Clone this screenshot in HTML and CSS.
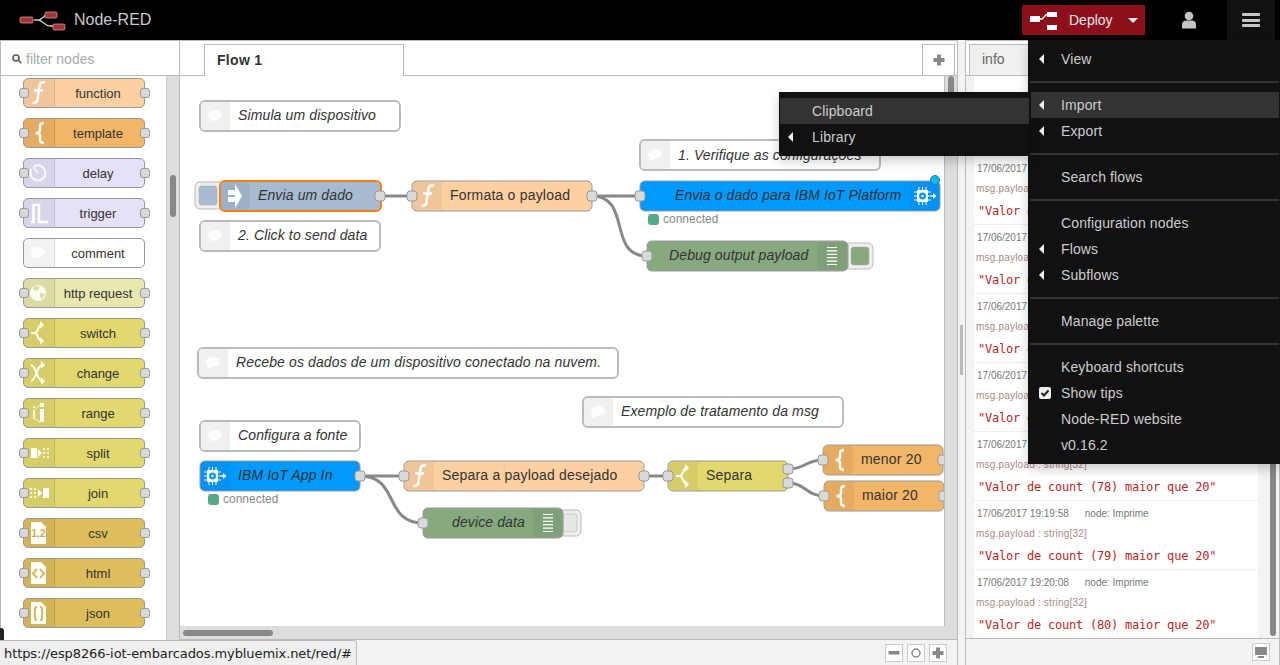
FILE: index.html
```html
<!DOCTYPE html>
<html lang="en">
  <head>
    <meta charset="UTF-8" />
    <title>Node-RED</title>
    <link rel="stylesheet" href="styles.css">
  </head>
  <body>
    <!-- icon sprites, all drawn in a 30x30 box -->
    <svg class="sprites" aria-hidden="true">
      <symbol id="i-func" viewBox="0 0 30 30"><path class="ln w25" d="M22 4.500c-3-1-5 0-5.500 3.500l-2 13c-.5 3.500-2.500 4.500-5 3.500M11 12.500h9"/></symbol>
      <symbol id="i-tmpl" viewBox="0 0 30 30"><path class="ln w25" d="M21 5c-3 0-4 1-4 3.500V12c0 2-1.500 3-4.500 3 3 0 4.500 1 4.500 3v3.500c0 2.500 1 3.500 4 3.500"/></symbol>
      <symbol id="i-delay" viewBox="0 0 30 30"><path class="ln w2 dim" d="M11 8.500A7.500 7.500 0 1 1 8.500 11"/><path class="ln w15 dim" d="M15.500 15.500L10 9"/></symbol>
      <symbol id="i-trig" viewBox="0 0 30 30"><path class="ln w25" d="M8 24h2.500V7H16v17h9"/></symbol>
      <symbol id="i-comment" viewBox="0 0 30 30"><ellipse class="fl soft" cx="15" cy="14" rx="7" ry="5"/><path class="fl soft" d="M11 17l-3 4 7-2z"/></symbol>
      <symbol id="i-globe" viewBox="0 0 30 30"><circle class="fl soft" cx="15" cy="15" r="8"/><path class="cut" d="M12 8l5 1-2 3-4 1-1-3zM17 15l5 1-3 5-2-2z"/></symbol>
      <symbol id="i-switch" viewBox="0 0 30 30"><path class="ln w2" d="M8 15h4c3 0 3-8 6-8M12 15c3 0 3 8 6 8"/><path class="fl" d="M17 3l4 4-4 4zM17 19l4 4-4 4z"/></symbol>
      <symbol id="i-change" viewBox="0 0 30 30"><path class="ln w2" d="M8 7c5 0 6 16 11 16M8 23c5 0 6-16 11-16"/><path class="fl" d="M18 3l4 4-4 4zM18 19l4 4-4 4z"/></symbol>
      <symbol id="i-range" viewBox="0 0 30 30"><path class="fl dim" d="M10 12h2v9h-2zM10 8h2v2h-2z"/><path class="fl" d="M17 11h4v13h-4zM17 5h4v4h-4z"/><path class="ln w1 dim" d="M12 11l5-4M12 21l5 3"/></symbol>
      <symbol id="i-split" viewBox="0 0 30 30"><path class="fl" d="M8 10h6v10H8zM15 11l4 4-4 4z"/><path class="fl dim" d="M20 10h2v2h-2zM24 10h2v2h-2zM20 14h2v2h-2zM24 14h2v2h-2zM20 18h2v2h-2zM24 18h2v2h-2z"/></symbol>
      <symbol id="i-join" viewBox="0 0 30 30"><path class="fl" d="M20 10h6v10h-6zM15 11l4 4-4 4z"/><path class="fl dim" d="M7 10h2v2H7zM11 10h2v2h-2zM7 14h2v2H7zM11 14h2v2h-2zM7 18h2v2H7zM11 18h2v2h-2z"/></symbol>
      <symbol id="i-html" viewBox="0 0 30 30"><path class="fl" d="M8 4h10l5 5v17H8z"/><path class="doc-ln" d="M14 11l-4 4.500 4 4.500M17 11l4 4.500-4 4.500"/></symbol>
      <symbol id="i-json" viewBox="0 0 30 30"><path class="fl" d="M8 4h10l5 5v17H8z"/><path class="doc-ln" d="M14 9c-2 0-2 1-2 2v2.500c0 1-.5 2-1.500 2 1 0 1.500 1 1.500 2V20c0 1 0 2 2 2M17 9c2 0 2 1 2 2v2.500c0 1 .5 2 1.500 2-1 0-1.500 1-1.500 2V20c0 1 0 2-2 2"/></symbol>
      <symbol id="i-inject" viewBox="0 0 30 30"><path class="fl" d="M8 9h7v5H8zM8 16h7v5H8zM15 3l7 12-7 12z"/></symbol>
      <symbol id="i-chip" viewBox="0 0 30 30"><path class="fl" d="M7 9h11v12H7z"/><path class="ln w1" d="M9 6v18M12.500 6v18M16 6v18M4 11h17M4 15h17M4 19h17"/><circle class="chip-eye" cx="12.500" cy="15" r="3.500"/><circle class="fl" cx="12.500" cy="15" r="1.200"/><path class="ln w15" d="M21 15h4"/><path class="fl" d="M23 12l3.500 3-3.500 3z"/></symbol>
      <symbol id="i-debug" viewBox="0 0 30 30"><path class="ln w12" d="M10 6.500h10M10 9.900h10M10 13.300h10M10 16.700h10M10 20.100h10M10 23.500h10"/></symbol>
      <symbol id="i-plus" viewBox="0 0 14 14"><path d="M5 1.500h4V5h3.500v4H9v3.500H5V9H1.500V5H5z"/></symbol>
      <symbol id="i-minus" viewBox="0 0 14 14"><path d="M1.500 5h11v3.500h-11z"/></symbol>
    </svg>

    <header class="topbar">
      <div class="brand">
        <svg class="brand-logo" viewBox="0 0 50 24">
          <path class="logo-wire" d="M15 12h4c5 0 6-6 11-6h2M19 12c5 0 6 6 12 6h4"/>
          <rect class="logo-box" x="1" y="9" width="13" height="6" rx="1.500"/>
          <rect class="logo-box" x="26" y="4" width="12" height="6" rx="1.500"/>
          <rect class="logo-box" x="34" y="16" width="12" height="6" rx="1.500"/>
        </svg>
        <span>Node-RED</span>
      </div>
      <div class="top-actions">
        <a class="deploy">
          <svg class="deploy-icon" viewBox="0 0 28 20">
            <path d="M0 6h10v6H0zM17 2h10v5H17zM17 15h10v5H17z"/>
            <path class="deploy-wire" d="M10 9h2l5-5"/>
          </svg>
          <span>Deploy</span>
          <i class="caret"></i>
        </a>
        <a class="user-btn">
          <svg viewBox="0 0 16 18"><circle cx="8" cy="5" r="4.300"/><path d="M1 17.500v-4c0-2.500 2-4 4-4h6c2 0 4 1.500 4 4v4z"/></svg>
        </a>
        <a class="menu-btn"><i></i><i></i><i></i></a>
      </div>
    </header>

    <main class="app">
      <aside class="palette">
        <div class="filter">
          <svg class="filter-icon" viewBox="0 0 10 10"><circle cx="4" cy="4" r="3"/><path d="M6.300 6.300L9.300 9.300"/></svg>
          <span>filter nodes</span>
        </div>
        <div class="palette-body">
          <div class="palette-list">
            <div class="pnode c-func"><span class="picon"><svg><use href="#i-func"/></svg></span><span class="plabel">function</span><i class="port in"></i><i class="port out"></i></div>
            <div class="pnode c-tmpl"><span class="picon"><svg><use href="#i-tmpl"/></svg></span><span class="plabel">template</span><i class="port in"></i><i class="port out"></i></div>
            <div class="pnode c-delay"><span class="picon"><svg><use href="#i-delay"/></svg></span><span class="plabel">delay</span><i class="port in"></i><i class="port out"></i></div>
            <div class="pnode c-delay"><span class="picon"><svg><use href="#i-trig"/></svg></span><span class="plabel">trigger</span><i class="port in"></i><i class="port out"></i></div>
            <div class="pnode c-comment"><span class="picon"><svg><use href="#i-comment"/></svg></span><span class="plabel">comment</span></div>
            <div class="pnode c-http"><span class="picon"><svg><use href="#i-globe"/></svg></span><span class="plabel">http request</span><i class="port in"></i><i class="port out"></i></div>
            <div class="pnode c-switch"><span class="picon"><svg><use href="#i-switch"/></svg></span><span class="plabel">switch</span><i class="port in"></i><i class="port out"></i></div>
            <div class="pnode c-switch"><span class="picon"><svg><use href="#i-change"/></svg></span><span class="plabel">change</span><i class="port in"></i><i class="port out"></i></div>
            <div class="pnode c-switch"><span class="picon"><svg><use href="#i-range"/></svg></span><span class="plabel">range</span><i class="port in"></i><i class="port out"></i></div>
            <div class="pnode c-switch"><span class="picon"><svg><use href="#i-split"/></svg></span><span class="plabel">split</span><i class="port in"></i><i class="port out"></i></div>
            <div class="pnode c-switch"><span class="picon"><svg><use href="#i-join"/></svg></span><span class="plabel">join</span><i class="port in"></i><i class="port out"></i></div>
            <div class="pnode c-parse"><span class="picon"><svg viewBox="0 0 30 30"><path class="fl" d="M8 4h10l5 5v17H8z"/><text class="doc-tx" x="15.500" y="19">1,2</text></svg></span><span class="plabel">csv</span><i class="port in"></i><i class="port out"></i></div>
            <div class="pnode c-parse"><span class="picon"><svg><use href="#i-html"/></svg></span><span class="plabel">html</span><i class="port in"></i><i class="port out"></i></div>
            <div class="pnode c-parse"><span class="picon"><svg><use href="#i-json"/></svg></span><span class="plabel">json</span><i class="port in"></i><i class="port out"></i></div>
          </div>
          <div class="palette-scroll"><i></i></div>
        </div>
      </aside>

      <section class="workspace">
        <div class="ws-tabs">
          <div class="ws-tab">Flow 1</div>
          <a class="ws-add"><svg><use href="#i-plus"/></svg></a>
        </div>
        <div class="ws-middle">
          <!-- the flow canvas, viewBox keeps page coordinates -->
          <svg class="canvas" viewBox="180 76 764 550">
            <g class="wires">
              <path d="M380 196H412"/>
              <path d="M592 196H640"/>
              <path d="M592 196C632 196 607 256 647 256"/>
              <path d="M360 476H404"/>
              <path d="M360 476C400 476 383 523 423 523"/>
              <path d="M644 476H668"/>
              <path d="M788 469C806 469 805 460 823 460"/>
              <path d="M788 483C806 483 806 496 824 496"/>
            </g>

            <rect class="nbox comment" x="200" y="101" width="200" height="30" rx="5"/>
            <path class="nside" d="M230 102H205a4 4 0 0 0-4 4v20a4 4 0 0 0 4 4H230z"/>
            <use href="#i-comment" x="200" y="101" width="30" height="30"/>
            <text class="nt it" x="238" y="120">Simula um dispositivo</text>

            <rect class="nbox comment" x="640" y="140" width="240" height="30" rx="5"/>
            <path class="nside" d="M670 141H645a4 4 0 0 0-4 4v20a4 4 0 0 0 4 4H670z"/>
            <use href="#i-comment" x="640" y="140" width="30" height="30"/>
            <text class="nt it" x="678" y="160">1. Verifique as configurações</text>

            <rect class="nbtn" x="195" y="182" width="30" height="27" rx="5"/>
            <rect class="ninner f-inject" x="199" y="186" width="18" height="19" rx="3"/>
            <rect class="nbox selected f-inject" x="220" y="181" width="161" height="30" rx="5"/>
            <path class="nside" d="M250 182.500H225a4 4 0 0 0-4 4v19a4 4 0 0 0 4 4H250z"/>
            <use href="#i-inject" x="220" y="181" width="30" height="30"/>
            <text class="nt it" x="258" y="200">Envia um dado</text>
            <rect class="nport" x="375" y="191" width="10" height="10" rx="3"/>

            <rect class="nbox comment" x="200" y="221" width="180" height="30" rx="5"/>
            <path class="nside" d="M230 222H205a4 4 0 0 0-4 4v20a4 4 0 0 0 4 4H230z"/>
            <use href="#i-comment" x="200" y="221" width="30" height="30"/>
            <text class="nt it" x="238" y="240">2. Click to send data</text>

            <rect class="nbox f-func" x="412" y="181" width="180" height="30" rx="5"/>
            <path class="nside" d="M442 182H417a4 4 0 0 0-4 4v20a4 4 0 0 0 4 4H442z"/>
            <use href="#i-func" x="412" y="181" width="30" height="30"/>
            <text class="nt" x="450" y="200">Formata o payload</text>
            <rect class="nport" x="407" y="191" width="10" height="10" rx="3"/>
            <rect class="nport" x="587" y="191" width="10" height="10" rx="3"/>

            <rect class="nbox f-ibm" x="640" y="181" width="300" height="30" rx="5"/>
            <path class="nside" d="M910 182H935a4 4 0 0 1 4 4v20a4 4 0 0 1-4 4H910z"/>
            <use href="#i-chip" x="910" y="181" width="30" height="30"/>
            <text class="nt it" x="675" y="200">Envia o dado para IBM IoT Platform</text>
            <rect class="nport" x="635" y="191" width="10" height="10" rx="3"/>
            <circle class="nchanged" cx="935" cy="180" r="4.500"/>
            <rect class="nstatus" x="648" y="214" width="11" height="11" rx="3"/>
            <text class="nstext" x="663" y="223">connected</text>

            <rect class="nbtn" x="845" y="243" width="28" height="26" rx="5"/>
            <rect class="ninner f-debug" x="851" y="247" width="18" height="18" rx="3"/>
            <rect class="nbox f-debug" x="647" y="241" width="201" height="30" rx="5"/>
            <path class="nside" d="M817 242H843a4 4 0 0 1 4 4v20a4 4 0 0 1-4 4H817z"/>
            <use href="#i-debug" x="817" y="241" width="30" height="30"/>
            <text class="nt it" x="669" y="260">Debug output payload</text>
            <rect class="nport" x="642" y="251" width="10" height="10" rx="3"/>

            <rect class="nbox comment" x="198" y="348" width="420" height="30" rx="5"/>
            <path class="nside" d="M228 349H203a4 4 0 0 0-4 4v20a4 4 0 0 0 4 4H228z"/>
            <use href="#i-comment" x="198" y="348" width="30" height="30"/>
            <text class="nt it" x="236" y="367">Recebe os dados de um dispositivo conectado na nuvem.</text>

            <rect class="nbox comment" x="583" y="397" width="260" height="30" rx="5"/>
            <path class="nside" d="M613 398H588a4 4 0 0 0-4 4v20a4 4 0 0 0 4 4H613z"/>
            <use href="#i-comment" x="583" y="397" width="30" height="30"/>
            <text class="nt it" x="621" y="416">Exemplo de tratamento da msg</text>

            <rect class="nbox comment" x="200" y="421" width="160" height="30" rx="5"/>
            <path class="nside" d="M230 422H205a4 4 0 0 0-4 4v20a4 4 0 0 0 4 4H230z"/>
            <use href="#i-comment" x="200" y="421" width="30" height="30"/>
            <text class="nt it" x="238" y="440">Configura a fonte</text>

            <rect class="nbox f-ibm" x="200" y="461" width="160" height="30" rx="5"/>
            <path class="nside" d="M230 462H205a4 4 0 0 0-4 4v20a4 4 0 0 0 4 4H230z"/>
            <use href="#i-chip" x="200" y="461" width="30" height="30"/>
            <text class="nt it" x="238" y="480">IBM IoT App In</text>
            <rect class="nport" x="355" y="471" width="10" height="10" rx="3"/>
            <rect class="nstatus" x="208" y="494" width="11" height="11" rx="3"/>
            <text class="nstext" x="223" y="503">connected</text>

            <rect class="nbox f-func" x="404" y="461" width="240" height="30" rx="5"/>
            <path class="nside" d="M434 462H409a4 4 0 0 0-4 4v20a4 4 0 0 0 4 4H434z"/>
            <use href="#i-func" x="404" y="461" width="30" height="30"/>
            <text class="nt" x="442" y="480">Separa a payload desejado</text>
            <rect class="nport" x="399" y="471" width="10" height="10" rx="3"/>
            <rect class="nport" x="639" y="471" width="10" height="10" rx="3"/>

            <rect class="nbox f-switch" x="668" y="461" width="120" height="30" rx="5"/>
            <path class="nside" d="M698 462H673a4 4 0 0 0-4 4v20a4 4 0 0 0 4 4H698z"/>
            <use href="#i-switch" x="668" y="461" width="30" height="30"/>
            <text class="nt" x="706" y="480">Separa</text>
            <rect class="nport" x="663" y="471" width="10" height="10" rx="3"/>
            <rect class="nport" x="783" y="464" width="10" height="10" rx="3"/>
            <rect class="nport" x="783" y="478" width="10" height="10" rx="3"/>

            <rect class="nbox f-tmpl" x="823" y="445" width="120" height="30" rx="5"/>
            <path class="nside" d="M853 446H828a4 4 0 0 0-4 4v20a4 4 0 0 0 4 4H853z"/>
            <use href="#i-tmpl" x="823" y="445" width="30" height="30"/>
            <text class="nt" x="861" y="464">menor 20</text>
            <rect class="nport" x="818" y="455" width="10" height="10" rx="3"/>
            <rect class="nport" x="938" y="455" width="10" height="10" rx="3"/>

            <rect class="nbox f-tmpl" x="824" y="481" width="120" height="30" rx="5"/>
            <path class="nside" d="M854 482H829a4 4 0 0 0-4 4v20a4 4 0 0 0 4 4H854z"/>
            <use href="#i-tmpl" x="824" y="481" width="30" height="30"/>
            <text class="nt" x="862" y="500">maior 20</text>
            <rect class="nport" x="819" y="491" width="10" height="10" rx="3"/>
            <rect class="nport" x="939" y="491" width="10" height="10" rx="3"/>

            <rect class="nbtn" x="556" y="510" width="25" height="26" rx="5"/>
            <rect class="ninner f-debug-off" x="563" y="514" width="14" height="18" rx="3"/>
            <rect class="nbox f-debug" x="423" y="508" width="140" height="30" rx="5"/>
            <path class="nside" d="M533 509H558a4 4 0 0 1 4 4v20a4 4 0 0 1-4 4H533z"/>
            <use href="#i-debug" x="533" y="508" width="30" height="30"/>
            <text class="nt it" x="452" y="527">device data</text>
            <rect class="nport" x="418" y="518" width="10" height="10" rx="3"/>
          </svg>
          <div class="vscroll"><i></i></div>
        </div>
        <div class="hscroll"><i></i></div>
        <div class="ws-footer">
          <a class="zbtn"><svg><use href="#i-minus"/></svg></a>
          <a class="zbtn"><svg viewBox="0 0 14 14"><circle class="zring" cx="7" cy="7" r="4"/></svg></a>
          <a class="zbtn"><svg><use href="#i-plus"/></svg></a>
        </div>
      </section>

      <div class="separator"><i></i></div>

      <aside class="sidebar">
        <div class="side-tabs"><div class="side-tab">info</div></div>
        <div class="side-body">
          <div class="debug-list">
            <div class="msg"><div class="msg-top"><span>17/06/2017 19:19:08</span><span>node: Imprime</span></div><div class="msg-meta">msg.payload : string[32]</div><div class="msg-val">"Valor de count (74) maior que 20"</div></div>
            <div class="msg"><div class="msg-top"><span>17/06/2017 19:19:18</span><span>node: Imprime</span></div><div class="msg-meta">msg.payload : string[32]</div><div class="msg-val">"Valor de count (75) maior que 20"</div></div>
            <div class="msg"><div class="msg-top"><span>17/06/2017 19:19:28</span><span>node: Imprime</span></div><div class="msg-meta">msg.payload : string[32]</div><div class="msg-val">"Valor de count (76) maior que 20"</div></div>
            <div class="msg"><div class="msg-top"><span>17/06/2017 19:19:38</span><span>node: Imprime</span></div><div class="msg-meta">msg.payload : string[32]</div><div class="msg-val">"Valor de count (77) maior que 20"</div></div>
            <div class="msg"><div class="msg-top"><span>17/06/2017 19:19:48</span><span>node: Imprime</span></div><div class="msg-meta">msg.payload : string[32]</div><div class="msg-val">"Valor de count (78) maior que 20"</div></div>
            <div class="msg"><div class="msg-top"><span>17/06/2017 19:19:58</span><span>node: Imprime</span></div><div class="msg-meta">msg.payload : string[32]</div><div class="msg-val">"Valor de count (79) maior que 20"</div></div>
            <div class="msg"><div class="msg-top"><span>17/06/2017 19:20:08</span><span>node: Imprime</span></div><div class="msg-meta">msg.payload : string[32]</div><div class="msg-val">"Valor de count (80) maior que 20"</div></div>
          </div>
          <div class="side-scroll"><i></i></div>
        </div>
        <div class="side-footer">
          <a class="zbtn">
            <svg class="monitor" viewBox="0 0 14 14"><path d="M1 2h12v8H1zM4 11h6v2H4z"/></svg>
          </a>
        </div>
      </aside>
    </main>

    <!-- open menus, they lie over the sidebar and canvas -->
    <ul class="menu main-menu">
      <li class="item sub">View</li>
      <li class="rule"></li>
      <li class="item sub active">Import</li>
      <li class="item sub">Export</li>
      <li class="rule"></li>
      <li class="item">Search flows</li>
      <li class="rule"></li>
      <li class="item">Configuration nodes</li>
      <li class="item sub">Flows</li>
      <li class="item sub">Subflows</li>
      <li class="rule"></li>
      <li class="item">Manage palette</li>
      <li class="rule"></li>
      <li class="item">Keyboard shortcuts</li>
      <li class="item">
        <svg class="check" viewBox="0 0 12 12"><rect width="12" height="12" rx="2"/><path d="M2.500 6l2.500 2.500 4.500-5"/></svg>
        Show tips
      </li>
      <li class="item">Node-RED website</li>
      <li class="item">v0.16.2</li>
    </ul>
    <ul class="menu import-menu">
      <li class="item active">Clipboard</li>
      <li class="item sub">Library</li>
    </ul>

    <div class="url-corner"></div>
    <div class="url-bubble">https://esp8266-iot-embarcados.mybluemix.net/red/#</div>
  </body>
</html>
```

FILE: styles.css
```css
* {
  box-sizing: border-box;
}

html,
body {
  margin: 0;
  height: 100%;
  overflow: hidden;
}

body {
  display: flex;
  flex-direction: column;
  font-family: "Liberation Sans", Arial, sans-serif;
  font-size: 14px;
  color: #333;
  background: #f3f3f3;
}

.sprites {
  position: absolute;
  width: 0;
  height: 0;
}

/* sprite parts */
.ln {
  fill: none;
  stroke: #fff;
}
.fl {
  fill: #fff;
}
.w1 {
  stroke-width: 1;
}
.w12 {
  stroke-width: 1.2;
}
.w15 {
  stroke-width: 1.5;
}
.w2 {
  stroke-width: 2;
}
.w25 {
  stroke-width: 2.500;
}
.dim {
  opacity: 0.8;
}
.soft {
  opacity: 0.85;
}
.cut {
  fill: #dcdca6;
}
.chip-eye {
  fill: #0099ff;
}
.doc-tx {
  font-family: "Liberation Sans", Arial, sans-serif;
  font-size: 10px;
  font-weight: bold;
  text-anchor: middle;
  fill: #cfa94f;
}
.doc-ln {
  fill: none;
  stroke: #d8b65c;
  stroke-width: 2;
}

/* top bar */
.topbar {
  flex: 0 0 40px;
  display: flex;
  justify-content: space-between;
  background: #000;
}

.brand {
  display: flex;
  align-items: center;
  padding-left: 19px;
  font-size: 16px;
  color: #c9c9c9;
}

.brand-logo {
  width: 50px;
  height: 24px;
  margin-right: 5px;
}

.logo-box {
  fill: #a83333;
  stroke: #d8b5b5;
  stroke-width: 0.7;
}

.logo-wire {
  fill: none;
  stroke: #c4c4c4;
  stroke-width: 1.500;
}

.top-actions {
  display: flex;
  align-items: stretch;
  padding-right: 5px;
}

.deploy {
  display: flex;
  align-items: center;
  width: 123px;
  height: 30px;
  margin-top: 5px;
  padding-left: 8px;
  background: #8c101c;
  color: #e6e6e6;
}

.deploy-icon {
  width: 28px;
  height: 20px;
  margin-right: 11px;
  fill: #fff;
}

.deploy-wire {
  fill: none;
  stroke: #fff;
  stroke-width: 1.5;
}

.caret {
  margin-left: 15px;
  border-top: 5px solid #eee;
  border-left: 5px solid transparent;
  border-right: 5px solid transparent;
}

.user-btn {
  display: flex;
  align-items: center;
  justify-content: center;
  width: 48px;
  margin-left: 20px;
  margin-right: 14px;
}

.user-btn svg {
  width: 16px;
  height: 18px;
  fill: #c4c4c4;
}

.menu-btn {
  display: flex;
  flex-direction: column;
  align-items: center;
  justify-content: center;
  gap: 2.500px;
  width: 48px;
  background: #111;
}

.menu-btn i {
  width: 18px;
  height: 3px;
  background: #c8c8c8;
  border-radius: 1px;
}

/* main row */
.app {
  flex: 1;
  display: flex;
  min-height: 0;
}

/* palette */
.palette {
  flex: 0 0 180px;
  display: flex;
  flex-direction: column;
  border: 1px solid #bbb;
  border-bottom: 0;
  background: #fff;
}

.filter {
  flex: 0 0 35px;
  display: flex;
  align-items: center;
  padding: 2px 0 0 11px;
  border-bottom: 1px solid #bbb;
  color: #aaa;
}

.filter-icon {
  width: 10px;
  height: 10px;
  margin-right: 4px;
  fill: none;
  stroke: #555;
  stroke-width: 1.6;
}

.palette-body {
  flex: 1;
  display: flex;
  min-height: 0;
}

.palette-list {
  flex: 1;
  padding: 2px 0 0 22px;
}

.pnode {
  position: relative;
  display: flex;
  width: 122px;
  height: 30px;
  margin-bottom: 10px;
  border: 1px solid #999;
  border-radius: 5px;
  font-size: 13px;
}

.picon {
  flex: 0 0 31px;
  background: rgba(0, 0, 0, 0.05);
  border-right: 1px solid rgba(0, 0, 0, 0.1);
  border-radius: 4px 0 0 4px;
}

.picon svg {
  display: block;
  width: 30px;
  height: 30px;
  margin: -1px 0 0 -1px;
}

.plabel {
  flex: 1;
  padding-right: 3px;
  line-height: 30px;
  text-align: center;
}

.port {
  position: absolute;
  top: 9px;
  width: 10px;
  height: 10px;
  background: #d9d9d9;
  border: 1px solid #999;
  border-radius: 3px;
}

.port.in {
  left: -5px;
}

.port.out {
  right: -6px;
}

.c-func {
  background: #fdd0a2;
}
.c-tmpl {
  background: #f3b567;
}
.c-delay {
  background: #e6e0f8;
}
.c-comment {
  background: #fff;
}
.c-http {
  background: #e7e7ae;
}
.c-switch {
  background: #e2d96e;
}
.c-parse {
  background: #debd5c;
}

.palette-scroll {
  flex: 0 0 13px;
  padding: 99px 3px 0 3px;
  background: #ddd;
  border-left: 1px solid #ccc;
}

.palette-scroll i {
  display: block;
  height: 42px;
  background: #888;
  border-radius: 3px;
}

/* workspace */
.workspace {
  flex: 1;
  min-width: 0;
  display: flex;
  flex-direction: column;
  border-top: 1px solid #bbb;
  border-right: 1px solid #bbb;
  background: #fff;
}

.ws-tabs {
  flex: 0 0 35px;
  display: flex;
  justify-content: space-between;
  align-items: flex-end;
  padding: 0 2px 0 24px;
  border-bottom: 1px solid #bbb;
}

.ws-tab {
  width: 200px;
  height: 32px;
  margin-bottom: -1px;
  padding-left: 12px;
  line-height: 30px;
  font-weight: bold;
  letter-spacing: 0.3px;
  background: #fff;
  border: 1px solid #bbb;
  border-bottom: 0;
}

.ws-add {
  display: flex;
  align-items: center;
  justify-content: center;
  width: 33px;
  height: 31px;
  background: #fff;
  border: 1px solid #bbb;
  border-bottom: 0;
}

.ws-add svg {
  width: 14px;
  height: 14px;
  fill: #888;
}

.ws-middle {
  flex: 1;
  display: flex;
  min-height: 0;
}

.canvas {
  flex: 1;
  display: block;
  width: 764px;
  height: 550px;
}

.vscroll {
  flex: 0 0 13px;
  padding: 0 3px;
  background: #ddd;
  border-left: 1px solid #bbb;
}

.vscroll i {
  display: block;
  height: 40px;
  background: #888;
  border-radius: 3px;
}

.hscroll {
  flex: 0 0 13px;
  padding: 4px 0 0 3px;
  background: #ddd;
}

.hscroll i {
  display: block;
  width: 90px;
  height: 6px;
  background: #888;
  border-radius: 3px;
}

.ws-footer {
  flex: 0 0 26px;
  display: flex;
  justify-content: flex-end;
  align-items: center;
  gap: 4px;
  padding-right: 10px;
  background: #f3f3f3;
  border-top: 1px solid #bbb;
}

.zbtn {
  display: flex;
  align-items: center;
  justify-content: center;
  width: 18px;
  height: 18px;
  background: #fff;
  border: 1px solid #ccc;
}

.zbtn svg {
  width: 14px;
  height: 14px;
  fill: #888;
}

.zring {
  fill: none;
  stroke: #888;
  stroke-width: 1.5;
}

/* flow canvas */
.wires path {
  fill: none;
  stroke: #888;
  stroke-width: 3;
}

.nbox {
  stroke: #999;
  stroke-width: 1;
}

.comment {
  fill: #fff;
  stroke: #bbb;
  stroke-width: 2;
}

.selected {
  stroke: #ff7f0e;
  stroke-width: 2;
}

.nside {
  fill: rgba(0, 0, 0, 0.05);
  stroke: none;
}

.comment + .nside {
  fill: #f0f0f0;
}

.nbtn {
  fill: #eee;
  stroke: #bbb;
  stroke-width: 1;
}

.ninner {
  stroke: #aaa;
  stroke-width: 0.5;
}

.nport {
  fill: #d9d9d9;
  stroke: #999;
  stroke-width: 1;
}

.nt {
  font-size: 14px;
  letter-spacing: 0.2px;
  fill: #333;
}

.it {
  font-style: italic;
  letter-spacing: 0.12px;
}

.nstatus {
  fill: #5a8;
}

.nstext {
  font-size: 12px;
  fill: #888;
}

.nchanged {
  fill: #00bcff;
  stroke: #3b6f8c;
  stroke-width: 1;
}

.f-inject {
  fill: #a6bbcf;
}
.f-func {
  fill: #fdd0a2;
}
.f-tmpl {
  fill: #f3b567;
}
.f-switch {
  fill: #e2d96e;
}
.f-ibm {
  fill: #0099ff;
}
.f-debug {
  fill: #87a980;
}
.f-debug-off {
  fill: #e3e9e1;
}

/* separator */
.separator {
  flex: 0 0 7px;
  display: flex;
  align-items: center;
  justify-content: center;
  padding-bottom: 6px;
  background: #f3f3f3;
}

.separator i {
  width: 3px;
  height: 50px;
  background: #bbb;
}

/* sidebar */
.sidebar {
  flex: 0 0 315px;
  display: flex;
  flex-direction: column;
  border: 1px solid #bbb;
  border-bottom: 0;
  background: #f3f3f3;
}

.side-tabs {
  flex: 0 0 35px;
  display: flex;
  align-items: flex-end;
  padding-left: 3px;
  border-bottom: 1px solid #bbb;
  background: #fff;
}

.side-tab {
  width: 60px;
  height: 31px;
  padding-left: 12px;
  line-height: 28px;
  color: #666;
  background: #f0f0f0;
  border: 1px solid #bbb;
  border-bottom: 0;
}

.side-body {
  flex: 1;
  display: flex;
  min-height: 0;
}

.debug-list {
  flex: 0 0 284px;
  display: flex;
  flex-direction: column;
  justify-content: flex-end;
  margin-left: 8px;
  background: #fff;
}

.msg {
  flex: 0 0 69px;
  border-top: 1px solid #eee;
}

.msg-top {
  display: flex;
  gap: 16px;
  height: 26px;
  padding: 7px 0 0 3px;
  font-size: 10px;
  line-height: 12px;
  color: #777;
}

.msg-meta {
  height: 14px;
  padding-left: 2px;
  font-size: 10px;
  letter-spacing: 0.2px;
  line-height: 14px;
  color: #a88;
}

.msg-val {
  padding: 7px 0 0 4px;
  font-family: "DejaVu Sans Mono", "Liberation Mono", monospace;
  font-size: 12px;
  letter-spacing: -0.22px;
  line-height: 16px;
  color: #b72828;
}

.side-scroll {
  flex: 1;
  display: flex;
  justify-content: flex-end;
  padding-right: 3px;
}

.side-scroll i {
  width: 6px;
  margin-bottom: 2px;
  background: #888;
  border-radius: 3px;
}

.side-footer {
  flex: 0 0 27px;
  display: flex;
  justify-content: flex-end;
  align-items: center;
  padding-right: 9px;
  border-top: 1px solid #bbb;
}

.monitor {
  fill: #999;
}

/* menus */
.menu {
  position: absolute;
  margin: 0;
  padding: 6px 1px 6px 3px;
  list-style: none;
  background: #111;
  box-shadow: 0 5px 10px rgba(0, 0, 0, 0.2);
}

.main-menu {
  top: 40px;
  left: 1028px;
  width: 252px;
}

.import-menu {
  top: 92px;
  left: 779px;
  width: 250px;
  padding-left: 1px;
  padding-right: 0;
}

.item {
  position: relative;
  height: 26px;
  padding-left: 30px;
  line-height: 26px;
  letter-spacing: 0.12px;
  color: #ccc;
}

.import-menu .item {
  padding-left: 32px;
}

.active {
  background: #333;
}

.sub::before {
  content: "";
  position: absolute;
  left: 8px;
  top: 8px;
  border-right: 5px solid #eee;
  border-top: 5px solid transparent;
  border-bottom: 5px solid transparent;
}

.rule {
  height: 2px;
  margin: 9px 0 9px -1px;
  background: #333;
}

.check {
  position: absolute;
  left: 8px;
  top: 7px;
  width: 12px;
  height: 12px;
}

.check rect {
  fill: #eee;
}

.check path {
  fill: none;
  stroke: #222;
  stroke-width: 2;
}

/* browser link preview, bottom left */
.url-corner {
  position: absolute;
  left: 0;
  top: 628px;
  width: 4px;
  height: 13px;
  background: #222;
  border-radius: 0 3px 0 0;
}

.url-bubble {
  position: absolute;
  left: 0;
  bottom: 0;
  width: 357px;
  height: 25px;
  padding-left: 4px;
  font-family: "DejaVu Sans", sans-serif;
  font-size: 13px;
  letter-spacing: -0.08px;
  line-height: 26px;
  white-space: nowrap;
  color: #222;
  background: #efefef;
  border: 1px solid #bbb;
  border-left: 0;
  border-bottom: 0;
  border-radius: 0 3px 0 0;
}
```
